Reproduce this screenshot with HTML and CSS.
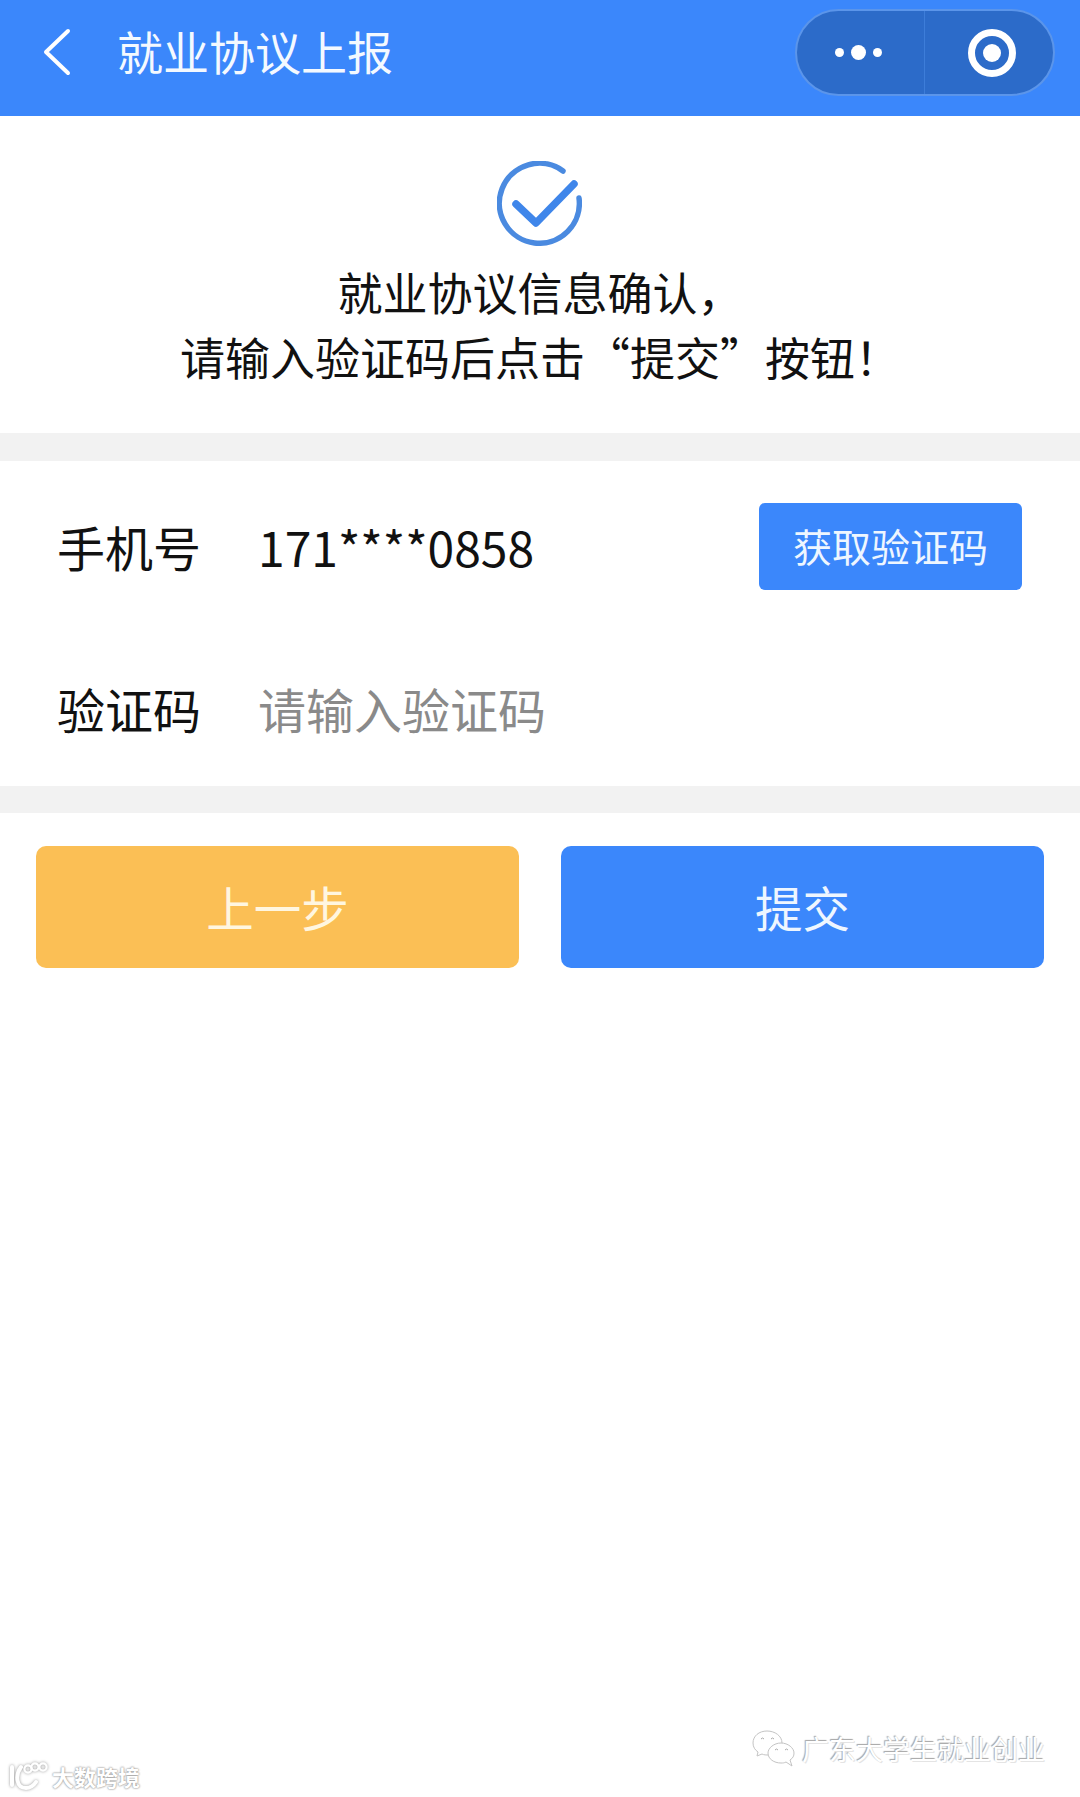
FILE: index.html
```html
<!DOCTYPE html>
<html lang="zh-CN">
<head>
<meta charset="utf-8">
<title>就业协议上报</title>
<link rel="stylesheet" href="styles.css">
</head>
<body>
<div class="page">
  <header class="nav">
    <svg class="back" viewBox="0 0 30 50" width="30" height="50"><path d="M26 4 L4 25 L26 46" fill="none" stroke="#fff" stroke-width="4" stroke-linecap="round" stroke-linejoin="round"/></svg>
    <h1 class="nav-title">就业协议上报</h1>
    <div class="capsule">
      <div class="capsule-part capsule-more">
        <span class="dot"></span><span class="dot dot-big"></span><span class="dot"></span>
      </div>
      <div class="capsule-part capsule-close">
        <svg viewBox="0 0 50 50" width="50" height="50"><circle cx="25" cy="25" r="20.5" fill="none" stroke="#fff" stroke-width="7"/><circle cx="25" cy="25" r="9" fill="#fff"/></svg>
      </div>
    </div>
  </header>

  <section class="intro">
    <svg class="check" viewBox="0 0 85 85" width="85" height="85">
      <path d="M66 10 A40 40 0 1 0 82 37" fill="none" stroke="#4a8ae0" stroke-width="5.5" stroke-linecap="round"/>
      <path d="M19 43 L39 62 L77 23" fill="none" stroke="#3f86ea" stroke-width="7.5" stroke-linecap="round" stroke-linejoin="round"/>
    </svg>
    <p class="intro-text">就业协议信息确认，<br>请输入验证码后点击“提交”按钮！</p>
  </section>

  <div class="band"></div>

  <section class="form">
    <div class="row row-phone">
      <span class="label">手机号</span>
      <span class="value">171****0858</span>
      <button class="code-btn" type="button"><span class="code-btn-text">获取验证码</span></button>
    </div>
    <div class="row row-code">
      <span class="label">验证码</span>
      <span class="placeholder">请输入验证码</span>
    </div>
  </section>

  <div class="band band-low"></div>

  <section class="actions">
    <button class="action action-prev" type="button">上一步</button>
    <button class="action action-submit" type="button">提交</button>
  </section>

  <div class="mark mark-left">
    <svg viewBox="0 0 40 30" width="40" height="30"><g fill="none" stroke="#fff" stroke-linecap="round"><path d="M3 6 V24" stroke-width="4"/><path d="M12 6 C6 14 7 27 17 27 C22 27 25 24 27 21" stroke-width="4"/><circle cx="19" cy="8" r="3.6" stroke-width="2.2"/><circle cx="26" cy="6" r="3.6" stroke-width="2.2"/><circle cx="34" cy="6" r="3.6" stroke-width="2.2"/></g></svg>
    <span class="mark-left-text">大数跨境</span>
  </div>
  <div class="mark mark-right">
    <svg viewBox="0 0 43 38" width="43" height="38"><g fill="#fff" stroke="#c4c4c4" stroke-width="1"><path d="M15 1 C7 1 1 6 1 13 C1 17 3 20 6 22 L5 26 L10 24 C12 25 14 25 17 25 C24 25 30 20 30 13 C30 6 23 1 15 1 Z"/><path d="M29 13 C22 13 16 18 16 23 C16 29 22 33 29 33 C31 33 32 33 34 32 L40 36 L38 30 C41 28 42 26 42 23 C42 18 36 13 29 13 Z"/></g><g fill="none" stroke="#aaa" stroke-width="1"><path d="M9 9 q1.5 -2 3 0"/><path d="M19 9 q1.5 -2 3 0"/><path d="M23 20 q1.5 -2 3 0"/><path d="M33 20 q1.5 -2 3 0"/></g></svg>
    <span class="mark-right-text">广东大学生就业创业</span>
  </div>
</div>
</body>
</html>
```

FILE: styles.css
```css
* { box-sizing: border-box; }
html, body { margin: 0; padding: 0; background: #fff; }
body { font-family: "Noto Sans CJK SC", "Noto Sans", sans-serif; color: #111; }
button { font-family: inherit; border: 0; padding: 0; color: #fff; }

.page { position: relative; width: 1080px; height: 1797px; overflow: hidden; background: #fff; }

.nav { height: 116px; background: #3b87fb; display: flex; align-items: center; padding: 0 25px 14px 42px; color: #fff; }
.back { flex: none; margin-top: 2px; }
.nav-title { margin: 0 0 2px 45px; font-size: 46px; line-height: 60px; font-weight: 400; flex: 1; color: #f4f9ff; }
.capsule { width: 260px; height: 87px; margin-top: 3px; border-radius: 44px; background: #2c6bc9; border: 2px solid #5b95ea; display: flex; align-items: center; }
.capsule-part { flex: 1; height: 100%; display: flex; align-items: center; justify-content: center; gap: 7px; }
.capsule-more { flex: none; width: 128px; border-right: 1px solid #3d7dd9; padding-right: 4px; }
.capsule-close { padding-left: 6px; }
.dot { width: 9px; height: 9px; border-radius: 50%; background: #fff; }
.dot-big { width: 15px; height: 15px; }

.intro { height: 317px; padding-top: 45px; display: flex; flex-direction: column; align-items: center; }
.check { flex: none; display: block; margin-left: -2px; }
.intro-text { margin: 13px 0 0; width: 100%; font-size: 45px; line-height: 65px; text-align: center; color: #111; }

.band { height: 28px; background: #f2f2f2; }
.band-low { height: 27px; }

.form { height: 325px; padding: 42px 58px 0 57px; display: flex; flex-direction: column; }
.row { display: flex; align-items: center; font-size: 48px; }
.row-phone { height: 87px; }
.row-code { height: 87px; margin-top: 75px; }
.label { width: 201px; flex: none; line-height: 60px; margin-bottom: 2px; }
.value { flex: 1; line-height: 60px; margin-bottom: 2px; }
.placeholder { flex: 1; line-height: 60px; color: #8a8a8a; margin-bottom: 2px; }
.code-btn { width: 263px; height: 87px; flex: none; border-radius: 6px; background: #3b87fb; font-size: 39px; line-height: 50px; color: #eef6ff; }
.code-btn-text { display: block; margin-bottom: 3px; }

.actions { display: flex; gap: 42px; padding: 33px 36px 0; }
.action { flex: 1; height: 122px; border-radius: 10px; font-size: 47.5px; line-height: 60px; }
.action-prev { background: #fbbf55; color: #fff6e0; }
.action-submit { background: #3b87fb; color: #eef6ff; }

.mark { position: absolute; display: flex; align-items: center; color: #fff; }
.mark svg { flex: none; }
.mark-left { left: 9px; top: 1761px; gap: 3px; }
.mark-left svg { filter: drop-shadow(0 0 1.5px #999); }
.mark-left-text { font-size: 22px; line-height: 30px; font-weight: 700; text-shadow: 0 0 2px #999, 0 0 2px #999; }
.mark-right { left: 752px; top: 1728px; gap: 8px; }
.mark-right-text { font-size: 27px; line-height: 40px; margin-top: 1px; margin-left: -1px; color: #fff; text-shadow: -1px -1px 1px #a5a5a5, 1px 1px 0 #e4e4e4; }
```
